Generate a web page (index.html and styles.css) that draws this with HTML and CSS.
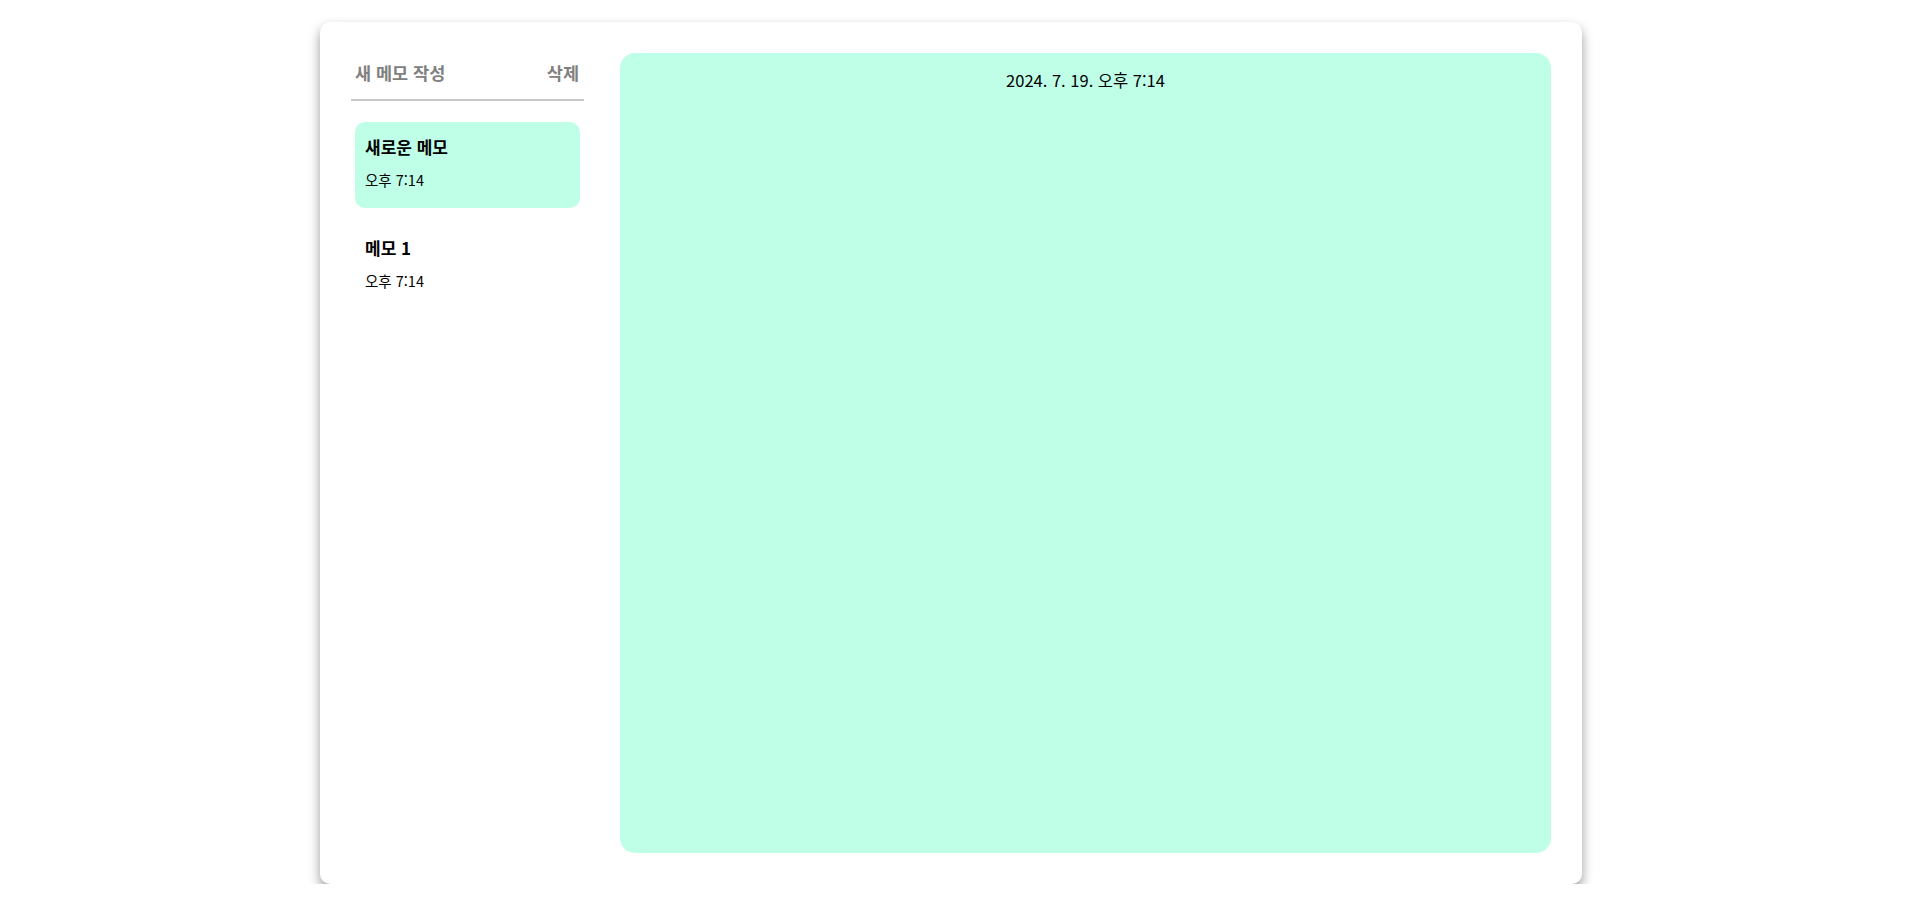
FILE: index.html
```html
<!DOCTYPE html>
<html lang="ko">
<head>
<meta charset="utf-8">
<title>메모</title>
<link rel="stylesheet" href="styles.css">
</head>
<body>
<div class="app">
  <aside class="sidebar">
    <div class="sidebar-header">
      <span class="action">새 메모 작성</span>
      <span class="action">삭제</span>
    </div>
    <ul class="memo-list">
      <li class="memo-item active">
        <div class="memo-title">새로운 메모</div>
        <div class="memo-time">오후 7:14</div>
      </li>
      <li class="memo-item">
        <div class="memo-title">메모 1</div>
        <div class="memo-time">오후 7:14</div>
      </li>
    </ul>
  </aside>
  <main class="editor">
    <div class="editor-date">2024. 7. 19. 오후 7:14</div>
  </main>
</div>
</body>
</html>
```

FILE: styles.css
```css
* { box-sizing: border-box; }
html, body {
  margin: 0;
  padding: 0;
  background: #ffffff;
  font-family: "Noto Sans CJK KR", "Noto Sans", sans-serif;
  color: #000;
}
.app {
  width: 1262px;
  height: 862px;
  margin: 22px 0 0 320px;
  padding: 31px;
  display: flex;
  gap: 36px;
  background: #fff;
  border-radius: 10px;
  box-shadow: 0 6px 12px rgba(0, 0, 0, 0.4);
}
.sidebar {
  width: 233px;
  flex: none;
  display: flex;
  flex-direction: column;
}
.sidebar-header {
  display: flex;
  justify-content: space-between;
  padding: 8px 5px 14px 4px;
  line-height: 24px;
  border-bottom: 2px solid #c8c8c8;
}
.action {
  font-size: 17.5px;
  font-weight: 700;
  color: #808080;
}
.memo-list {
  list-style: none;
  margin: 0;
  padding: 21px 4px 0;
}
.memo-item {
  height: 86px;
  padding: 14px 10px 0;
  border-radius: 10px;
  margin-bottom: 15px;
}
.memo-item.active {
  background: #bfffe8;
}
.memo-title {
  font-size: 17px;
  font-weight: 700;
  line-height: 22px;
}
.memo-time {
  margin-top: 12px;
  font-size: 14.5px;
  line-height: 20px;
}
.editor {
  flex: 1;
  background: #bfffe8;
  border-radius: 15px;
}
.editor-date {
  padding-top: 16px;
  text-align: center;
  font-size: 16.5px;
  line-height: 22px;
}
```
